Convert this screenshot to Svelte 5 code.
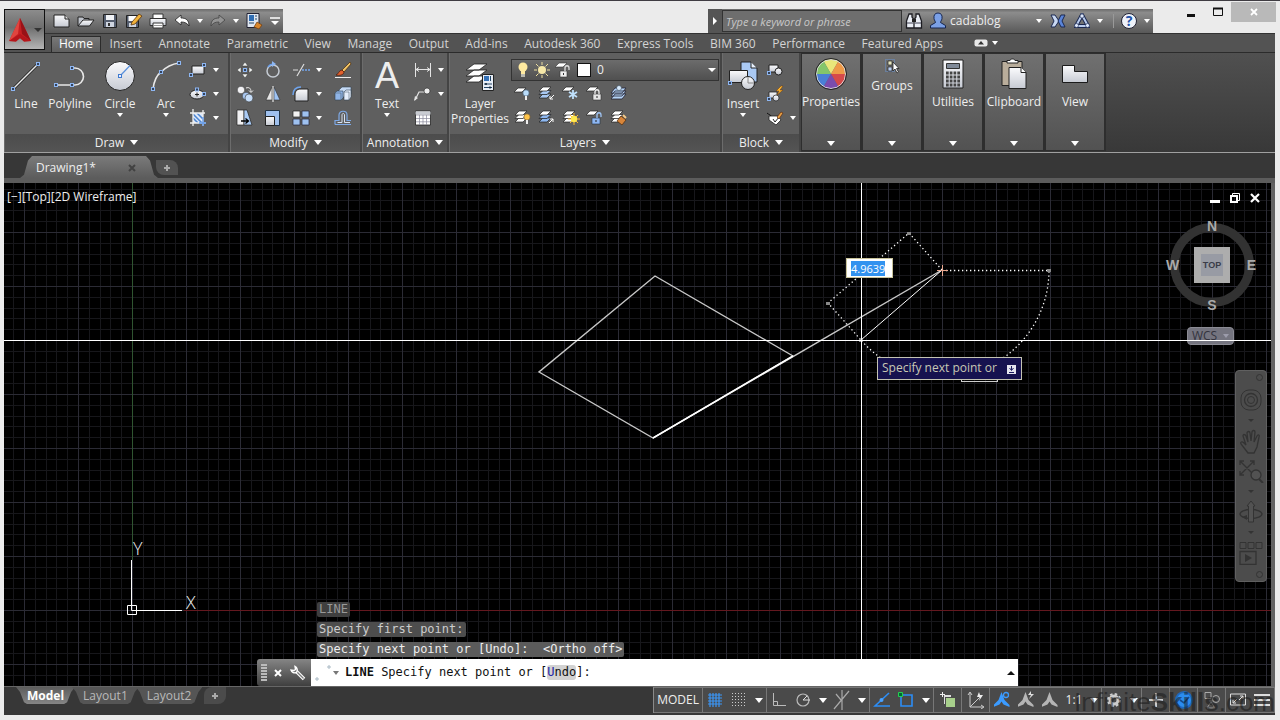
<script lang="ts">
  type Tool = { icon: string; label: string; arrow?: boolean };

  const menuTabs = [
    'Home', 'Insert', 'Annotate', 'Parametric', 'View', 'Manage', 'Output', 'Add-ins',
    'Autodesk 360', 'Express Tools', 'BIM 360', 'Performance', 'Featured Apps',
  ];

  const quickAccess: Tool[] = [
    { icon: 'new', label: 'New' },
    { icon: 'open', label: 'Open' },
    { icon: 'save', label: 'Save' },
    { icon: 'saveAs', label: 'Save As' },
    { icon: 'print', label: 'Plot' },
    { icon: 'undo', label: 'Undo', arrow: true },
    { icon: 'redo', label: 'Redo', arrow: true },
    { icon: 'workspace', label: 'Workspace' },
  ];

  const drawSmall: Tool[] = [
    { icon: 'rect', label: 'Rectangle', arrow: true },
    { icon: 'ellipse', label: 'Ellipse', arrow: true },
    { icon: 'hatch', label: 'Hatch', arrow: true },
  ];

  const modifyTools: Tool[] = [
    { icon: 'move', label: 'Move' },
    { icon: 'rotate', label: 'Rotate' },
    { icon: 'trim', label: 'Trim', arrow: true },
    { icon: 'erase', label: 'Erase' },
    { icon: 'copy', label: 'Copy' },
    { icon: 'mirror', label: 'Mirror' },
    { icon: 'fillet', label: 'Fillet', arrow: true },
    { icon: 'explode', label: 'Explode' },
    { icon: 'stretch', label: 'Stretch' },
    { icon: 'scale', label: 'Scale' },
    { icon: 'array', label: 'Array', arrow: true },
    { icon: 'offset', label: 'Offset' },
  ];

  const annotateTools: Tool[] = [
    { icon: 'dimension', label: 'Dimension', arrow: true },
    { icon: 'leader', label: 'Leader', arrow: true },
    { icon: 'table', label: 'Table' },
  ];

  const layerTools = [
    'layOff', 'layIso', 'layFreeze', 'layLock', 'layCurrent',
    'layOn', 'layUniso', 'layThaw', 'layUnlock', 'layMatch',
  ];

  const blockTools: Tool[] = [
    { icon: 'blockCreate', label: 'Create block' },
    { icon: 'blockEdit', label: 'Edit block' },
    { icon: 'blockAttr', label: 'Edit attributes', arrow: true },
  ];

  const collapsed: Tool[] = [
    { icon: 'properties', label: 'Properties' },
    { icon: 'groups', label: 'Groups' },
    { icon: 'utilities', label: 'Utilities' },
    { icon: 'clipboard', label: 'Clipboard' },
    { icon: 'view', label: 'View' },
  ];

  const statusGroups: Tool[][] = [
    [{ icon: 'sGrid', label: 'Grid' }, { icon: 'sSnap', label: 'Snap', arrow: true }],
    [{ icon: 'sOrtho', label: 'Ortho' }, { icon: 'sPolar', label: 'Polar', arrow: true }, { icon: 'sIso', label: 'Isodraft', arrow: true }],
    [{ icon: 'sTrack', label: 'Tracking' }, { icon: 'sOsnap', label: 'Object snap', arrow: true }],
    [{ icon: 'sCycle', label: 'Selection cycling' }],
    [{ icon: 'sUcs', label: 'Dynamic UCS' }],
    [{ icon: 'sAnnoBlue', label: 'Annotation visibility' }, { icon: 'sAnnoAuto', label: 'Auto scale' }, { icon: 'sAnno', label: 'Annotation scale' }, { icon: '', label: '1:1', arrow: true }],
    [{ icon: 'sGear', label: 'Workspace switching', arrow: true }],
    [{ icon: 'sPlus', label: 'Annotation monitor' }],
    [{ icon: 'sPerf', label: 'Graphics performance' }],
    [{ icon: 'sIsolate', label: 'Isolate objects' }],
    [{ icon: 'sFull', label: 'Clean screen' }, { icon: 'sMenu', label: 'Customization' }],
  ];

  const navTools: Tool[] = [
    { icon: 'nWheel', label: 'Wheel', arrow: true },
    { icon: 'nPan', label: 'Pan' },
    { icon: 'nZoom', label: 'Zoom', arrow: true },
    { icon: 'nOrbit', label: 'Orbit', arrow: true },
    { icon: 'nMotion', label: 'ShowMotion' },
  ];

  const history = ['LINE', 'Specify first point:', 'Specify next point or [Undo]:  <Ortho off>'];

  const grip = (x: number, y: number) =>
    `<rect x="${x - 1.5}" y="${y - 1.5}" width="3" height="3" fill="#34435c" stroke="#8db6f2"/>`;
  const sheet = (x: number, y: number, fill = '#fff') =>
    `<path d="M${x + 4} ${y}h8l-4 4h-8z" fill="${fill}" stroke="#222" stroke-width=".7"/>`;
  const stack = (top = '#fff', low = '#fff') => sheet(1, 10, low) + sheet(1, 6.5, low) + sheet(1, 3, top);
  const anno = (fill: string) =>
    `<path d="M7.500 1l3 8 5 5v2l-6-2.500-2-3-2 3-6 2.500v-2l5-5z" fill="${fill}"/>`;

  // markup for each icon, preceded by its width and height
  const icons: Record<string, [number, number, string]> = {
    logo: [24, 26, `<path d="M12 1 1 24l7 .5 4-3.500 4 3.500 7-.5z" fill="#c51f22"/><path d="M12 1 1 24l9-7z" fill="#e0453f"/><path d="M12 1l2 16 9 7z" fill="#981217"/><path d="M1 24l11-7 11 7-7 .5-4-3.500-4 3.500z" fill="#b5161b"/>`],
    new: [18, 16, `<path d="M1 2h11l4 4v8H1z" fill="url(#silver)" stroke="#222"/><path d="M12 2v4h4" fill="#ddd" stroke="#222"/>`],
    open: [18, 16, `<path d="M1 13V4h5l1 1.500h5V8" fill="#bfc3cb" stroke="#222"/><path d="M1 13l5-6h11l-4.500 6z" fill="url(#silver)" stroke="#222"/>`],
    save: [16, 16, `<path d="M1.500 1.500h13v13h-13z" fill="#565f70" stroke="#222"/><path d="M4 2h8v5H4z" fill="#f1f3f7"/><path d="M4 9h8v5H4z" fill="#cfd5e0"/><path d="M6 10h2v3H6z" fill="#333"/>`],
    saveAs: [18, 16, `<path d="M1.500 2.500h12v12h-12z" fill="#565f70" stroke="#222"/><path d="M3.500 3h8v5h-8z" fill="#fff"/><path d="M4 10h7v4H4z" fill="#cfd5e0"/><path d="M7 9l7-8 3 2-7 8-4 1z" fill="#f1b23a" stroke="#5b3510" stroke-width=".8"/>`],
    print: [18, 16, `<path d="M4 1h10v5H4z" fill="#fff" stroke="#333"/><path d="M1 5.500h16v7H1z" fill="url(#silver)" stroke="#333"/><path d="M4 10h10v5H4z" fill="#fff" stroke="#333"/><path d="M5 12.500h8" stroke="#999"/>`],
    undo: [16, 14, `<path d="M1 6l6-5v3c5 0 8 2 8 8-2-3-4-4-8-4v3z" fill="#fff" stroke="#222" stroke-width=".8"/>`],
    redo: [16, 14, `<path d="M15 6L9 1v3C4 4 1 6 1 12c2-3 4-4 8-4v3z" fill="#949494" stroke="#444" stroke-width=".8"/>`],
    workspace: [18, 18, `<path d="M2 1.500h12v14H2z" fill="#dfe6f0" stroke="#223"/><path d="M4 3h5v6H4z" fill="#2f6db3"/><path d="M10 4h2M10 7h2M4 11h5" stroke="#246"/><path d="M9 15l3-5 5 3-3 4z" fill="#d9862b" stroke="#6b3a10" stroke-width=".7"/>`],
    menu: [10, 8, `<path d="M0 1h10" stroke="#fff" stroke-width="1.500"/><path d="M1 4h8L5 8z" fill="#fff"/>`],
    expand: [6, 8, `<path d="M1 0l4 4-4 4z" fill="#fff"/>`],
    find: [18, 18, `<path d="M4 2h3v3l2 3v8H1.500V9zM11 2h3l2.500 7v7H9V8l2-3z" fill="#e9edf4" stroke="#1d1d22" stroke-width="1.300"/><path d="M2 11h6M10 11h6" stroke="#445"/><path d="M7 7h4v3H7z" fill="#222"/>`],
    user: [16, 18, `<path d="M8 1c3 0 4.500 2 4 5.500-.3 2-1.500 3-1.500 4l5 3V16h-15v-2.500l5-3c0-1-1.200-2-1.500-4C3.500 3 5 1 8 1z" fill="#7ba0e6" stroke="#16254d"/>`],
    exchange: [16, 14, `<path d="M1 1h4l4 6-4 6H1l3-6z" fill="#c9d8f2" stroke="#1b2850"/><path d="M15 1h-4L8 7l3 6h4l-3-6z" fill="#5a84d8" stroke="#1b2850"/>`],
    a360: [16, 16, `<path d="M8 2l6 11H2z" fill="none" stroke="#1b2850" stroke-width="4"/><path d="M8 2l6 11H2z" fill="none" stroke="#b9ccee" stroke-width="2"/><circle cx="8" cy="3" r="2" fill="#dce7fa" stroke="#1b2850" stroke-width=".6"/><circle cx="2.500" cy="12.500" r="2" fill="#dce7fa" stroke="#1b2850" stroke-width=".6"/><circle cx="13.500" cy="12.500" r="2" fill="#dce7fa" stroke="#1b2850" stroke-width=".6"/>`],
    min: [8, 10, `<path d="M0 8.500h8" stroke="#111" stroke-width="3"/>`],
    max: [10, 10, `<path d="M.5 1.500h9v7h-9z" fill="none" stroke="#111"/><path d="M0 1.500h10" stroke="#111" stroke-width="2"/>`],
    close: [8, 8, `<path d="M1 1l6 6M7 1L1 7" stroke="#fff" stroke-width="1.800"/>`],
    ribbonMin: [14, 8, `<rect x=".5" y=".5" width="13" height="7" rx="2" fill="#e8e8e8"/><path d="M4 5.500h6L7 2z" fill="#333"/>`],
    line: [32, 32, `<path d="M3 29L28 4" stroke="#222" stroke-width="3"/><path d="M3 29L28 4" stroke="#e8e8e8" stroke-width="1.500"/>${grip(3, 29)}${grip(28, 4)}`],
    polyline: [34, 32, `<path d="M3 25H22A8.500 8.500 0 0 0 22 8H19" fill="none" stroke="#e8e8e8" stroke-width="1.600"/>${grip(3, 25)}${grip(19, 25)}${grip(19, 8)}`],
    circle: [32, 32, `<circle cx="16" cy="16" r="14.500" fill="url(#silver)" stroke="#222"/><path d="M16 16L26 5.500" stroke="#5990dc" stroke-width="1.200"/><rect x="14.500" y="14.500" width="3" height="3" fill="#eef" stroke="#3e7bd0"/>`],
    arc: [32, 32, `<path d="M3 29C4 21 7 15 11 12C16 7 22 4 29 3" fill="none" stroke="#e8e8e8" stroke-width="1.600"/>${grip(3, 29)}${grip(11, 12)}${grip(29, 3)}`],
    rect: [18, 14, `<path d="M3 3h12v8H3z" fill="url(#silver)" stroke="#222"/>${grip(15, 2)}${grip(2, 12)}`],
    ellipse: [18, 14, `<ellipse cx="8" cy="7.500" rx="7" ry="4.500" fill="url(#silver)" stroke="#222"/><path d="M8 5.500v4M6 7.500h4" stroke="#222"/>${grip(8, 2.500)}${grip(15, 7)}`],
    hatch: [18, 18, `<path d="M4 4h10v10H4z" fill="#dce8fa"/><path d="M4 9l5 5M4 5l9 9M8 4l6 6" stroke="#4c84d0" stroke-width="1.500"/><path d="M4 0v17M1 4h15M14 1v16M1 14h16" stroke="#eee" stroke-width="1.300" fill="none"/><path d="M14 8v9M10 14h7" stroke="#5f98ea" stroke-width="1.300"/>`],
    move: [18, 18, `<path d="M9 1l3 4H6zM9 17l3-4H6zM1 9l4-3v6zM17 9l-4-3v6z" fill="#f1f3f1" stroke="#333" stroke-width=".5"/>${grip(9, 9)}`],
    rotate: [18, 18, `<circle cx="9" cy="10" r="6" fill="none" stroke="#c6ccd4" stroke-width="1.500"/><path d="M4 6a7 7 0 0 1 5-3" stroke="#6aa0ee" stroke-width="1.500" fill="none"/><path d="M8 0l4 3-4 3z" fill="#8db6f2"/>`],
    trim: [18, 16, `<path d="M1 8h5M5 14L12 2" stroke="#ddd" stroke-width="1.200"/><path d="M10 8h8" stroke="#74a6ee" stroke-width="1.400" stroke-dasharray="2 1"/>`],
    erase: [18, 18, `<path d="M1 16.500h16" stroke="#eee"/><path d="M8 9l8-8 1 2-7 8z" fill="#f0c466" stroke="#4b2a0c" stroke-width=".7"/><path d="M2 14c2 0 3-5 6-5l2 2c0 3-5 4-8 3z" fill="#e3622e" stroke="#4b1a0c" stroke-width=".7"/>`],
    copy: [18, 18, `<circle cx="5" cy="5" r="3.800" fill="#f1f1f4" stroke="#333" stroke-width=".6"/><circle cx="10" cy="11" r="3.800" fill="#a8c6f0" stroke="#333" stroke-width=".6"/><circle cx="13" cy="13" r="4" fill="#c5dcf8" stroke="#333" stroke-width=".6"/><path d="M10 3c3-1 5 0 5 4M13 5.500l2 2 2-2" fill="none" stroke="#eee"/>`],
    mirror: [16, 16, `<path d="M7 1v13H1z" fill="#e6e6e6" stroke="#333" stroke-width=".6"/><path d="M9 1v13h6z" fill="#9fc4f4" stroke="#333" stroke-width=".6"/><path d="M8 0v16" stroke="#fff"/>`],
    fillet: [18, 16, `<path d="M3 15V9c0-4 2-6 6-6h7v12z" fill="url(#silver)" stroke="#222"/><path d="M1 9c0-5 2-8 8-8" stroke="#6ea3ec" stroke-width="1.500" fill="none"/>`],
    explode: [18, 16, `<path d="M5 4l3-3h9v7l-3 3H5z" fill="#c5daf5" stroke="#345" stroke-width=".6"/><path d="M1 7l2-2h6v7l-2 2H1z" fill="#8fb4e6" stroke="#345" stroke-width=".6"/><path d="M10 6l2-2h5v7l-2 3h-5z" fill="#e5eefb" stroke="#345" stroke-width=".6"/><path d="M1 7h6v7M10 6h5v8" fill="none" stroke="#567" stroke-width=".6"/>`],
    stretch: [18, 18, `<path d="M1 1h7v15H1z" fill="#f1f1f3" stroke="#222" stroke-width=".7"/><path d="M8 1h3l5 15H8z" fill="#a9caf4" stroke="#222" stroke-width=".7"/><path d="M5 12h7M9.500 9.500l3 2.500-3 2.500" stroke="#000" stroke-width="1.300" fill="none"/>`],
    scale: [18, 18, `<path d="M1.500 1.500h14v15h-14z" fill="#9fc0ee" stroke="#234"/><path d="M1.500 7.500h9v9h-9z" fill="url(#silver)" stroke="#222"/>`],
    array: [18, 18, `<path d="M1 2h7v6H1z" fill="#f2f2f2" stroke="#222" stroke-width=".7"/><path d="M10 2h7v6h-7zM1 10h7v6H1zM10 10h7v6h-7z" fill="#9ec1f0" stroke="#223" stroke-width=".7"/>`],
    offset: [18, 16, `<path d="M1 14.500h16M1 14.500v-4h4V5c0-5 8-5 8 0v5.500h4" fill="none" stroke="#7ea9e6" stroke-width="1.200"/><path d="M3.500 12.500H8V5c0-2 2.500-2 2.500 0v7.500H16" stroke="#d7e2f2" fill="none"/>`],
    dimension: [18, 16, `<path d="M1.500 1v14M16.500 1v14M2 7.500h14M5 5.500l-3 2 3 2M13 5.500l3 2-3 2" stroke="#e4e4e4" fill="none"/>`],
    leader: [18, 16, `<path d="M1 14l4-8h6" stroke="#e4e4e4" fill="none" stroke-width="1.200"/><path d="M0 15l1-5 3 2z" fill="#e4e4e4"/><circle cx="13" cy="5" r="3" fill="#eee" stroke="#222" stroke-width=".6"/>`],
    table: [16, 16, `<path d="M.5 1h15v14H.5z" fill="#fff" stroke="#222" stroke-width=".8"/><path d="M.5 1.500h15v3H.5z" fill="#c9ccd2"/><path d="M1 5h14M1 8.500h14M1 11.800h14M4.500 5v10M8 5v10M11.500 5v10" stroke="#889" stroke-width=".7"/>`],
    layerProps: [30, 30, `<path d="M9 15h13l-8 6H1zM9 9h13l-8 6H1zM9 3h13l-8 6H1z" fill="#fff" stroke="#222" stroke-width=".8"/><path d="M17.500 13.500h11v16h-11z" fill="#e7edf6" stroke="#222"/><path d="M19 15h5v5h-5z" fill="#3572b8"/><path d="M25.500 15v5M19 23h8M19 26.500h8" stroke="#246"/><path d="M21 22v2M25 25.500v2" stroke="#123" stroke-width="1.500"/>`],
    bulb: [12, 16, `<circle cx="6" cy="5" r="4.500" fill="#ffeaa0"/><path d="M4 8h4v4H4z" fill="#ffeaa0"/><path d="M4 12h4v3H4z" fill="#b8b8b0"/>`],
    sun: [16, 16, `<circle cx="8" cy="8" r="4" fill="#f6e8a8"/><path d="M8 0v3M8 13v3M0 8h3M13 8h3M2 2l2.500 2.500M11.500 11.500L14 14M14 2l-2.500 2.500M4.500 11.500L2 14" stroke="#eee0a0"/>`],
    comboLock: [16, 16, `<path d="M4 1h8L8 5H0z" fill="#fff" stroke="#333" stroke-width=".6"/><path d="M5 9h7v6H5z" fill="#eee" stroke="#333" stroke-width=".6"/><path d="M10 9V6c0-3 4-3 4 0v2" stroke="#ddd" stroke-width="1.300" fill="none"/><path d="M8.500 11v2" stroke="#333"/>`],
    layOff: [18, 18, `${sheet(0, 4)}<circle cx="12" cy="9" r="3.200" fill="#b9dcfa" stroke="#345" stroke-width=".6"/><path d="M12 12v4" stroke="#eee" stroke-width="2"/>`],
    layIso: [18, 18, `${stack('#fff', '#a8c8f2')}<path d="M16 11l-4 4M12 12v3h3" stroke="#fff" fill="none"/>`],
    layFreeze: [18, 18, `${sheet(0, 3)}<path d="M11 6v9M7 8l8 5M7 13l8-5" stroke="#bfe0fb" stroke-width="1.800"/>`],
    layLock: [18, 18, `${sheet(0, 3)}<path d="M7 10h8v6H7z" fill="#e6e6e6" stroke="#333" stroke-width=".6"/><path d="M9 10V8c0-3 4-3 4 0v2" stroke="#eee" fill="none" stroke-width="1.300"/><path d="M11 12v2" stroke="#222"/>`],
    layCurrent: [18, 18, `<path d="M5 10h11l-4 5H1zM5 7h11l-4 5H1zM5 4h11l-4 5H1z" fill="#b4d2f6" stroke="#223" stroke-width=".8"/><circle cx="9" cy="4" r="2.500" fill="#d9ebfd" stroke="#345" stroke-width=".6"/>`],
    layOn: [18, 18, `${stack()}<circle cx="13" cy="9" r="3.200" fill="#ffc44a" stroke="#543" stroke-width=".6"/><path d="M13 12v4" stroke="#eee" stroke-width="2"/>`],
    layUniso: [18, 18, `${stack('#fff', '#8db6ee')}<path d="M11 15l4-4M12 11h3v3" stroke="#fff" fill="none"/>`],
    layThaw: [18, 18, `${stack()}<path d="M12 5v12M6 11h12M8 7l8 8M16 7l-8 8" stroke="#ffb52e"/><circle cx="12" cy="11" r="3.200" fill="#ffe84a"/>`],
    layUnlock: [18, 18, `${sheet(0, 3)}<path d="M6 10h8v6H6z" fill="#8db6f2" stroke="#234" stroke-width=".6"/><path d="M11 10V7c0-3 4-3 4 0v2" stroke="#9fc4f4" fill="none" stroke-width="1.300"/><path d="M10 12v2" stroke="#222"/>`],
    layMatch: [18, 18, `${stack()}<path d="M7 13l4-5 5 4-4 5z" fill="#d7853a" stroke="#4b2a0c" stroke-width=".7"/><path d="M13 7l3 3" stroke="#f4c98a" stroke-width="2"/>`],
    insert: [32, 30, `<path d="M14 1h10l6 6v14H14z" fill="#a9c9f4" stroke="#222"/><path d="M24 1v6h6" fill="#e8f1fd" stroke="#222"/><path d="M2.500 9.500h18v12h-18z" fill="url(#silver)" stroke="#222"/><circle cx="21" cy="22" r="6.500" fill="url(#silver)" stroke="#222"/><path d="M21 16v6h6" fill="none" stroke="#888"/>${grip(3, 22)}`],
    blockCreate: [18, 16, `<path d="M3 3h9v7H3z" fill="url(#silver)" stroke="#222"/><circle cx="12.500" cy="9.500" r="3.500" fill="url(#silver)" stroke="#222"/>${grip(3, 11)}`],
    blockEdit: [18, 18, `<path d="M3 7h8v6H3z" fill="url(#silver)" stroke="#222" stroke-width=".8"/><circle cx="10" cy="13" r="3" fill="url(#silver)" stroke="#222" stroke-width=".7"/><path d="M15 1l-5 5h3l-2 4 6-5h-3l3-4z" fill="#ffb52e" stroke="#6b3a10" stroke-width=".5"/>${grip(3, 14)}`],
    blockAttr: [18, 16, `<path d="M1 3c2 2 3 1 4 3" stroke="#111" fill="none"/><path d="M3 6h9l3 4-5 5-7-5z" fill="#fff" stroke="#222" stroke-width=".8"/><path d="M7 9l2 3 4-5" stroke="#222" fill="none"/><path d="M11 7l4-5 2 1-4 6z" fill="#e8a246" stroke="#5b2a10" stroke-width=".7"/>`],
    properties: [32, 32, `<path d="M16 16L8.500 3A15 15 0 0 1 23.500 3z" fill="#e9e77a"/><path d="M16 16L8.500 3A15 15 0 0 0 1 16z" fill="#84c56b"/><path d="M16 16L23.500 3A15 15 0 0 1 31 16z" fill="#ee9a48"/><path d="M16 16H1A15 15 0 0 0 8.500 29z" fill="#4a7fd6"/><path d="M16 16H31A15 15 0 0 1 23.500 29z" fill="#d64a4a"/><path d="M16 16L8.500 29A15 15 0 0 0 23.500 29z" fill="#7a4cae"/><circle cx="16" cy="16" r="14.500" fill="none" stroke="#ddd"/><circle cx="16" cy="16" r="15.500" fill="none" stroke="#222"/>`],
    groups: [16, 16, `<path d="M1.500 1.500h9v12h-9z" fill="none" stroke="#6a94d0" stroke-dasharray="1 1"/><path d="M4 3h4v4H4z" fill="#e6e6c0" stroke="#222" stroke-width=".7"/><path d="M4 9h4v4H4z" fill="#b9cdf0" stroke="#222" stroke-width=".7"/><path d="M9 4v9l2-2 2 4 1.500-1-2-3.500H15z" fill="#fff" stroke="#222" stroke-width=".8"/>`],
    utilities: [24, 30, `<path d="M2 1h20v28H2z" fill="url(#silver)" stroke="#222"/><path d="M5.500 4.500h13v5h-13z" fill="#808a99" stroke="#333"/><path d="M5 14h14M5 18h14M5 22h14M5 26h14" stroke="#444" stroke-width="2.800" stroke-dasharray="2.700 1.070"/>`],
    clipboard: [28, 32, `<path d="M2 3.500h20v24H2z" fill="#b9ad9b" stroke="#222"/><path d="M7 5V2.500h3c0-2 5-2 5 0h3V5z" fill="#fff" stroke="#222"/><path d="M9 9.500h12l5 5v16H9z" fill="url(#silver)" stroke="#222"/><path d="M21 9.500v5h5" fill="#fff" stroke="#222"/>`],
    view: [28, 20, `<path d="M1.500 1.500h12v6h13v11h-25z" fill="url(#silver)" stroke="#1b1b1b"/>`],
    cross: [8, 8, `<path d="M1 1l6 6M7 1L1 7" stroke="currentColor" stroke-width="2"/>`],
    add: [8, 8, `<path d="M4 1v6M1 4h6" stroke="#aaa" stroke-width="2"/>`],
    vpMin: [10, 10, `<path d="M0 8.500h10" stroke="#fff" stroke-width="3"/>`],
    vpRestore: [10, 10, `<path d="M2.500 2V.500h7v7H8" fill="none" stroke="#fff"/><path d="M1 3h6v6H1z" fill="none" stroke="#fff" stroke-width="2"/>`],
    vpClose: [10, 10, `<path d="M1 1l8 8M9 1L1 9" stroke="#fff" stroke-width="2.200"/>`],
    wrench: [16, 16, `<path d="M6 6L14 14" stroke="#fff" stroke-width="3.500"/><path d="M6 6L13.500 13.500" stroke="#777" stroke-width="1.200"/><path d="M5 1.500l.5 3-1.500 1-3-.5a4 4 0 0 0 5.500 2.500A4 4 0 0 0 5 1.500z" fill="#777" stroke="#fff" stroke-width="1.400"/>`],
    cmdLine: [16, 18, `<path d="M1 14h2v2H1zM13 2h2v2h-2z" fill="none" stroke="#a9b9c4"/>`],
    sGrid: [16, 16, `<path d="M1 3h14M1 6h14M1 9h14M1 12h14M3 1v14M6 1v14M9 1v14M12 1v14" stroke="#3b96f6" stroke-width="1.200"/>`],
    sSnap: [16, 16, `<path d="M1 1.500h14M1 4.500h14M1 7.500h14M1 10.500h14M1 13.500h14" stroke="#ccc" stroke-dasharray="1 2"/>`],
    sOrtho: [16, 16, `<path d="M2.500 1v12.500H15M2.500 9.500h4v4" stroke="#bbb" fill="none"/>`],
    sPolar: [16, 16, `<circle cx="8" cy="8" r="6" fill="none" stroke="#bbb" stroke-width="1.200"/><path d="M8 8h7M8 8l4-4" stroke="#ddd"/>`],
    sIso: [18, 20, `<path d="M16 1L1 19M9 0v20M3 4l5 6" stroke="#aaa" stroke-width="1.200"/>`],
    sTrack: [18, 16, `<path d="M16 1L2 14h15" stroke="#2c8df5" stroke-width="1.600" fill="none"/><circle cx="8.500" cy="8" r="2" fill="#49a1ff"/>`],
    sOsnap: [18, 18, `<path d="M4 4h11v11H4z" fill="none" stroke="#2c8df5" stroke-width="1.600"/><path d="M1.500 1.500h4v4h-4z" fill="#063" stroke="#25d050"/>`],
    sCycle: [16, 16, `<path d="M6 6h9v9H6z" fill="#a7cf8b"/><path d="M4 3h7v2H5v7H4z" fill="#ddd"/><path d="M2.500 0v5M0 2.500h5" stroke="#eee"/>`],
    sUcs: [18, 18, `<path d="M3 2v14h13M3 16L13 6M1 4l2-3 2 3M14 14l3 2-3 2" stroke="#ccc" fill="none"/><path d="M12 1l-2 5h3l-1 4 4-6h-3z" fill="#eee"/>`],
    sAnnoBlue: [16, 18, `${anno('#3b9bff')}<circle cx="12" cy="4" r="2.500" fill="none" stroke="#3b9bff" stroke-width="1.300"/>`],
    sAnnoAuto: [16, 18, `${anno('#b5b5b5')}<path d="M13 0l-3 4h3l-2 4 5-5h-3z" fill="#ddd"/>`],
    sAnno: [16, 18, anno('#b5b5b5')],
    sGear: [16, 16, `<circle cx="8" cy="8" r="4" fill="none" stroke="#ccc" stroke-width="3"/><circle cx="8" cy="8" r="6" fill="none" stroke="#ccc" stroke-width="2" stroke-dasharray="2.500 2.210"/>`],
    sPlus: [14, 16, `<path d="M7 1v14M0 8h14" stroke="#ccc" stroke-width="2"/>`],
    sPerf: [18, 18, `<circle cx="9" cy="9" r="9" fill="#1f68bd"/><circle cx="9" cy="9" r="7" fill="#2b8cf0"/><path d="M5 9l4 3 5-6" stroke="#164a8a" stroke-width="1.600" fill="none"/>`],
    sIsolate: [18, 18, `<path d="M2 1.500h6v6H2z" fill="none" stroke="#aaa"/><circle cx="13" cy="8" r="3.500" fill="none" stroke="#aaa"/><path d="M8 11l4 6H4z" fill="none" stroke="#999"/>`],
    sFull: [16, 14, `<path d="M.5 1h15v11H.5z" fill="none" stroke="#ddd"/><path d="M3 10l4-4M3 7v3h3M13 3L9 7M10 3h3v3" fill="none" stroke="#ddd"/>`],
    sMenu: [16, 14, `<path d="M0 2h16M0 7h16M0 12h16" stroke="#ddd" stroke-width="1.800"/>`],
    nWheel: [24, 24, `<rect x="2" y="2" width="20" height="20" rx="8" fill="none" stroke="#2b2b2b"/><circle cx="12" cy="12" r="6.500" fill="none" stroke="#2b2b2b" stroke-width="1.300"/><circle cx="12" cy="12" r="3.500" fill="none" stroke="#2b2b2b"/>`],
    nPan: [24, 26, `<path d="M9 24L2 15c-1-2 1-3 3-1l2 2L4 7c0-2 2-2 3 0l2 6-1-9c0-2 3-2 3 0l1 8 1-9c0-2 3-2 3 0l-1 10 3-6c1-2 3-1 2 1l-2 10-3 6z" fill="none" stroke="#2b2b2b" stroke-width="1.300"/>`],
    nZoom: [26, 24, `<path d="M2 2l14 14M16 2L2 16M2 6V2h4M12 2h4v4M2 12v4h4" fill="none" stroke="#2b2b2b" stroke-width="1.300"/><circle cx="18" cy="16" r="5" fill="#555" stroke="#2b2b2b" stroke-width="1.300"/><path d="M21 20l4 4" stroke="#2b2b2b" stroke-width="2"/>`],
    nOrbit: [24, 24, `<ellipse cx="12" cy="14" rx="11" ry="4.500" fill="none" stroke="#2b2b2b" stroke-width="1.300"/><path d="M9.500 22V6H8l4-5 4 5h-1.500v16z" fill="#555" stroke="#2b2b2b"/><path d="M3 17l5-2v5z" fill="#2b2b2b"/>`],
    nMotion: [24, 24, `<path d="M1 1.500h6v6H1zM9 1.500h6v6H9zM17 1.500h6v6h-6z" fill="none" stroke="#2b2b2b"/><path d="M1 10.500h16v13H1z" fill="none" stroke="#2b2b2b" stroke-width="1.300"/><path d="M6 13l7 4-7 4z" fill="#2b2b2b"/>`],
  };

  let activeTab = $state('Home');
  let layout = $state('Model');
  let keyword = $state('');
  let layer = $state('0');
  let distance = $state('4.9639');
  let command = $state('');
</script>

{#snippet icon(name: string)}
  {@const [w, h, body] = icons[name]}
  <svg width={w} height={h} viewBox="0 0 {w} {h}" aria-hidden="true">{@html body}</svg>
{/snippet}

{#snippet arrow()}
  <span class="arrow" aria-hidden="true"></span>
{/snippet}

{#snippet small(tool: Tool)}
  <div class="small">
    <button class="tool" aria-label={tool.label}>{@render icon(tool.icon)}</button>
    {#if tool.arrow}
      <button class="drop" aria-label="{tool.label} options">{@render arrow()}</button>
    {/if}
  </div>
{/snippet}

<svg class="defs" width="0" height="0" aria-hidden="true">
  <linearGradient id="silver" x2="0" y2="1">
    <stop offset="0" stop-color="#fbfbfd" />
    <stop offset="1" stop-color="#c6cad3" />
  </linearGradient>
</svg>

<div class="window">
  <header>
    <button class="app-button" aria-label="Application menu">{@render icon('logo')}<span class="arrow dark"></span></button>
    <div class="quick">
      {#each quickAccess as q}
        <button class="tool" aria-label={q.label}>{@render icon(q.icon)}</button>
        {#if q.arrow}<button class="drop" aria-label="{q.label} list">{@render arrow()}</button>{/if}
      {/each}
      <button class="quick-menu" aria-label="Customize">{@render icon('menu')}</button>
    </div>
    <div class="info">
      <button class="expand" aria-label="Expand search">{@render icon('expand')}</button>
      <input type="text" placeholder="Type a keyword or phrase" aria-label="Search" bind:value={keyword} />
      <button class="tool" aria-label="Find">{@render icon('find')}</button>
      <button class="account">{@render icon('user')}<span>cadablog</span>{@render arrow()}</button>
      <button class="tool" aria-label="Exchange">{@render icon('exchange')}</button>
      <button class="tool" aria-label="A360">{@render icon('a360')}</button>
      <button class="drop" aria-label="A360 options">{@render arrow()}</button>
      <span class="divider"></span>
      <button class="help" aria-label="Help"><b>?</b></button>
      <button class="drop" aria-label="Help options">{@render arrow()}</button>
    </div>
    <div class="controls">
      <button aria-label="Minimize">{@render icon('min')}</button>
      <button aria-label="Maximize">{@render icon('max')}</button>
      <button class="close" aria-label="Close">{@render icon('close')}</button>
    </div>
  </header>

  <main>
    <nav class="menu">
      <div class="menu-tabs">
        {#each menuTabs as tab}
          <button class:active={activeTab === tab} onclick={() => (activeTab = tab)}>{tab}</button>
        {/each}
      </div>
      <button class="ribbon-toggle" aria-label="Minimize ribbon">{@render icon('ribbonMin')}{@render arrow()}</button>
    </nav>

    <section class="ribbon">
      <div class="panel">
        <div class="body draw">
          <button class="big w40">{@render icon('line')}<span>Line</span></button>
          <button class="big w48">{@render icon('polyline')}<span>Polyline</span></button>
          <button class="big w52">{@render icon('circle')}<span>Circle</span>{@render arrow()}</button>
          <button class="big w40">{@render icon('arc')}<span>Arc</span>{@render arrow()}</button>
          <div class="column">
            {#each drawSmall as t}{@render small(t)}{/each}
          </div>
        </div>
        <button class="title">Draw {@render arrow()}</button>
      </div>

      <div class="panel">
        <div class="body modify">
          {#each modifyTools as t}{@render small(t)}{/each}
        </div>
        <button class="title">Modify {@render arrow()}</button>
      </div>

      <div class="panel">
        <div class="body">
          <button class="big w48"><span class="letter">A</span><span>Text</span>{@render arrow()}</button>
          <div class="column">
            {#each annotateTools as t}{@render small(t)}{/each}
          </div>
        </div>
        <button class="title">Annotation {@render arrow()}</button>
      </div>

      <div class="panel">
        <div class="body">
          <button class="big w60">{@render icon('layerProps')}<span>Layer Properties</span></button>
          <div class="layers">
            <div class="combo">
              {@render icon('bulb')}{@render icon('sun')}{@render icon('comboLock')}
              <i class="swatch"></i>
              <select aria-label="Layer" bind:value={layer}><option>0</option></select>
              {@render arrow()}
            </div>
            <div class="layer-grid">
              {#each layerTools as name}
                <button class="tool" aria-label={name}>{@render icon(name)}</button>
              {/each}
            </div>
          </div>
        </div>
        <button class="title">Layers {@render arrow()}</button>
      </div>

      <div class="panel">
        <div class="body">
          <button class="big w40">{@render icon('insert')}<span>Insert</span>{@render arrow()}</button>
          <div class="column">
            {#each blockTools as t}{@render small(t)}{/each}
          </div>
        </div>
        <button class="title">Block {@render arrow()}</button>
      </div>

      {#each collapsed as c}
        <button class="folded" class:compact={c.icon === 'groups'}>
          <span class="pic">{@render icon(c.icon)}</span>
          <span>{c.label}</span>
          {@render arrow()}
        </button>
      {/each}
    </section>

    <div class="files">
      <div class="file"><span>Drawing1*</span><button aria-label="Close Drawing1">{@render icon('cross')}</button></div>
      <button class="file-add" aria-label="New drawing">{@render icon('add')}</button>
    </div>

    <section class="viewport">
      <svg class="drawing" width="100%" height="100%">
        <defs>
          <pattern id="grid" x="20" y="49" width="54" height="54" patternUnits="userSpaceOnUse">
            <path d="M11.500 0v54M22.500 0v54M32.500 0v54M43.500 0v54M0 11.500h54M0 22.500h54M0 32.500h54M0 43.500h54" stroke="#17171b" />
            <path d="M.5 0v54M0 .5h54" stroke="#2b2b35" />
          </pattern>
        </defs>
        <rect width="100%" height="100%" fill="url(#grid)" />
        <path d="M128.500 0v377" stroke="#2f5430" />
        <line x1="180" y1="427.500" x2="100%" y2="427.500" stroke="#64181f" />

        <g class="ucs">
          <path d="M123.500 422.500h9v9h-9zM127.500 377v50.500H178" />
          <text x="129" y="372">Y</text>
          <text x="182" y="426">X</text>
        </g>

        <g class="lines">
          <path d="M789 173L651 93 535 189 649 255z" />
          <path d="M649 255L938 87" />
        </g>
        <path d="M649 255L789 173" stroke="#fff" stroke-width="1.500" />
        <path d="M938 87L857 157" stroke="#fff" />
        <path class="dotted" d="M938 87L905 50 824 120 857 157M938 87.500H1045A107 107 0 0 1 857 157" />
        <path d="M903 49h4v3h-4zM822 119h4v3h-4zM1043 86h4v3h-4zM855 156h4v3h-4z" fill="#888" />
        <path d="M938.500 82v11M933 87.500h11" stroke="#e7a58e" />
      </svg>

      <p class="view-label">[−][Top][2D Wireframe]</p>
      <div class="view-controls">
        <button aria-label="Minimize view">{@render icon('vpMin')}</button>
        <button aria-label="Restore view">{@render icon('vpRestore')}</button>
        <button aria-label="Close view">{@render icon('vpClose')}</button>
      </div>

      <div class="cube">
        <b class="n">N</b><b class="w">W</b><b class="e">E</b><b class="s">S</b>
        <button>TOP</button>
      </div>
      <button class="wcs">WCS <span class="arrow"></span></button>

      <div class="navbar">
        <i class="dot"></i>
        {#each navTools as n}
          <button aria-label={n.label}>{@render icon(n.icon)}</button>
          {#if n.arrow}<span class="arrow dark"></span>{/if}
        {/each}
        <i class="dot"></i>
      </div>

      <svg class="drawing cursor" width="100%" height="100%" aria-hidden="true">
        <path d="M0 157.500h4000M857.500 0v4000" stroke="#fff" />
      </svg>

      <input class="distance" aria-label="Distance" bind:value={distance} />
      <div class="angle"></div>
      <div class="hint">
        <span>Specify next point or</span>
        <svg width="9" height="9" viewBox="0 0 9 9" aria-hidden="true">
          <path d="M0 0h9v9H0z" fill="#e4e4ee" />
          <path d="M4.500 1v4M2.500 3l2 2.500 2-2.500M2 7.500h5" stroke="#1b1b60" fill="none" />
        </svg>
      </div>

      <div class="command">
        <ul>
          {#each history as line}<li>{line}</li>{/each}
        </ul>
        <div class="command-bar">
          <div class="command-tools">
            <i class="handle"></i>
            <button aria-label="Close command line">{@render icon('cross')}</button>
            <button aria-label="Customize command line">{@render icon('wrench')}</button>
          </div>
          <div class="prompt">
            {@render icon('cmdLine')}
            <span class="arrow dark"></span>
            <label for="command"><b>LINE</b> Specify next point or [</label>
            <button class="undo"><em>U</em>ndo</button>
            <span>]:</span>
            <input id="command" bind:value={command} />
            <button class="history" aria-label="Show history"><span class="arrow up"></span></button>
          </div>
        </div>
      </div>
    </section>

    <footer>
      <div class="layouts">
        {#each ['Model', 'Layout1', 'Layout2'] as name}
          <button class:active={layout === name} onclick={() => (layout = name)}>{name}</button>
        {/each}
        <button class="layout-add" aria-label="New layout">{@render icon('add')}</button>
      </div>
      <div class="status">
        <div class="group"><button class="model">MODEL</button></div>
        {#each statusGroups as group}
          <div class="group">
            {#each group as s}
              <button class="tool" aria-label={s.label}>
                {#if s.icon}{@render icon(s.icon)}{:else}{s.label}{/if}
              </button>
              {#if s.arrow}<button class="drop" aria-label="{s.label} options">{@render arrow()}</button>{/if}
            {/each}
          </div>
        {/each}
      </div>
      <span class="brand">Infinite<b>Skills</b>.com</span>
    </footer>
  </main>
</div>

<style>
  :global(body) {
    margin: 0;
    background: #ebebeb;
  }
  .defs {
    position: absolute;
  }
  .window {
    display: flex;
    flex-direction: column;
    min-height: 100vh;
    box-sizing: border-box;
    padding: 0 5px 5px 4px;
    border-top: 1px solid #3f3c42;
    background: #ebebeb;
    color: #eee;
    font: 12px/16px 'Open Sans', 'Noto Sans', sans-serif;
  }
  button,
  input,
  select {
    margin: 0;
    padding: 0;
    border: 0;
    background: none;
    color: inherit;
    font: inherit;
  }
  button {
    display: flex;
    align-items: center;
    justify-content: center;
  }
  svg {
    display: block;
    flex: none;
  }
  .arrow {
    flex: none;
    border: 4px solid transparent;
    border-top-color: #fff;
    border-bottom: 0;
  }
  .arrow.dark {
    border-top-color: #333;
  }
  .arrow.up {
    border-top: 0;
    border-bottom: 4px solid #111;
  }
  .tool {
    width: 24px;
    height: 24px;
  }
  .drop {
    width: 12px;
    height: 24px;
  }
  .drop .arrow {
    border-width: 4px 3px 0;
  }

  /* title bar */
  header {
    position: relative;
    display: flex;
    align-items: flex-end;
    height: 32px;
  }
  .app-button {
    position: absolute;
    top: 8px;
    left: 0;
    z-index: 1;
    gap: 2px;
    width: 41px;
    height: 41px;
    box-sizing: border-box;
    border: 1px solid #111;
    background: linear-gradient(#8c8c8c, #6e6e6e 45%, #b5b5b5);
  }
  .quick,
  .info {
    display: flex;
    align-items: center;
    height: 24px;
    background: linear-gradient(#6a6a6a, #8c8c8c 15%, #585858);
  }
  .quick {
    margin-left: 41px;
    padding-left: 5px;
  }
  .quick-menu {
    width: 17px;
  }
  .info {
    margin-left: auto;
    box-sizing: border-box;
    width: 445px;
  }
  .expand {
    width: 14px;
    height: 24px;
    background: #555;
  }
  .info input {
    box-sizing: border-box;
    width: 180px;
    height: 22px;
    padding: 0 3px;
    border: 1px solid #333;
    background: #6e6e6e;
    font-size: 11px;
  }
  .info input::placeholder {
    color: #c8c8c8;
    font-style: italic;
    opacity: 1;
  }
  .account {
    flex: 1;
    gap: 4px;
    padding: 0 4px;
  }
  .account .arrow {
    margin-left: auto;
    border-width: 4px 3px 0;
  }
  .divider {
    width: 1px;
    height: 14px;
    margin: 0 7px;
    background: #999;
  }
  .help {
    width: 16px;
    height: 16px;
    margin-right: 4px;
    border: 1px solid #223;
    border-radius: 50%;
    background: #eef2fa;
    color: #2352a8;
    font-size: 14px;
  }
  .controls {
    display: flex;
    align-self: flex-start;
    margin: 1px -1px 0 24px;
  }
  .controls button {
    width: 27px;
    height: 20px;
  }
  .controls .close {
    width: 45px;
    background: #b9b9b9;
  }

  main {
    display: flex;
    flex: 1;
    flex-direction: column;
    background: #373737;
  }

  /* ribbon */
  .menu {
    display: flex;
    align-items: flex-end;
    height: 20px;
    padding-left: 47px;
    border-top: 1px solid #333;
    border-bottom: 1px solid #2b2b2b;
    box-sizing: border-box;
    background: #535353;
    color: #d4d4d4;
  }
  .menu-tabs {
    display: flex;
    flex: 0 1 900px;
    justify-content: space-between;
  }
  .menu-tabs button {
    height: 16px;
    padding: 0 8px;
    white-space: nowrap;
  }
  .menu-tabs .active {
    margin-bottom: -1px;
    padding: 0 7px 1px;
    border: 1px solid #2b2b2b;
    border-bottom: 0;
    background: linear-gradient(#787878, #5f5f5f);
    color: #fff;
  }
  .ribbon-toggle {
    gap: 4px;
    height: 18px;
    margin-left: 23px;
  }
  .ribbon-toggle .arrow {
    border-width: 4px 3px 0;
  }
  .ribbon {
    display: flex;
    height: 99px;
    border-bottom: 1px solid #a0a0a0;
    background: linear-gradient(#505050, #383838);
  }
  .panel {
    display: flex;
    flex-direction: column;
    border-right: 2px solid #444;
    border-left: 1px solid #6c6c6c;
    background: #5f5f5f;
  }
  .body {
    display: flex;
    flex: 1;
    padding-top: 5px;
  }
  .title {
    gap: 6px;
    height: 18px;
    padding-bottom: 1px;
    background: linear-gradient(#4c4c4c, #545454);
  }
  .title .arrow,
  .folded .arrow {
    border-width: 5px 4px 0;
  }
  .big {
    flex-direction: column;
    align-self: flex-start;
    justify-content: flex-start;
    padding-top: 2px;
    line-height: 15px;
  }
  .big span:not(.arrow, .letter) {
    margin-top: 4px;
  }
  .big svg,
  .letter {
    height: 32px;
  }
  .letter {
    font: 36px/32px 'Liberation Sans', Arial, sans-serif;
  }
  .big .arrow {
    margin-top: 2px;
    border-width: 4px 3px 0;
  }
  .w40 {
    width: 40px;
  }
  .w48 {
    width: 48px;
  }
  .w52 {
    width: 52px;
  }
  .w60 {
    width: 60px;
  }
  .small {
    display: flex;
    height: 24px;
  }
  .draw {
    padding-left: 1px;
    padding-right: 6px;
  }
  .modify {
    display: grid;
    grid-template-columns: 28px 28px 42px 28px;
    grid-auto-rows: 24px;
    padding-left: 2px;
    padding-right: 1px;
  }
  .layers {
    padding: 1px 1px 0 1px;
  }
  .combo {
    display: flex;
    align-items: center;
    gap: 6px;
    box-sizing: border-box;
    width: 208px;
    height: 22px;
    padding: 0 2px 0 5px;
    border: 1px solid #333;
    background: linear-gradient(#6c6c6c, #505050);
  }
  .combo svg + svg {
    margin-left: -1px;
  }
  .combo select {
    flex: 1;
    appearance: none;
  }
  .swatch {
    width: 12px;
    height: 12px;
    border: 1px solid #111;
    background: #fff;
  }
  .layer-grid {
    display: grid;
    grid-template-columns: repeat(5, 24px);
  }
  .folded {
    flex-direction: column;
    justify-content: flex-start;
    box-sizing: border-box;
    width: 61px;
    height: 98px;
    padding-bottom: 4px;
    border: 1px solid #2e2e2e;
    border-right-width: 2px;
    background: linear-gradient(#707070, #525252);
  }
  .pic {
    display: flex;
    align-items: center;
    height: 40px;
  }
  .compact .pic {
    height: 24px;
  }
  .folded .arrow {
    margin-top: auto;
  }

  /* drawing tabs */
  .files {
    display: flex;
    align-items: flex-end;
    height: 25px;
    padding-left: 16px;
    border-bottom: 5px solid #5c5c5c;
  }
  .file {
    display: flex;
    align-items: center;
    justify-content: space-between;
    box-sizing: border-box;
    width: 138px;
    height: 22px;
    padding: 1px 22px 0 16px;
    background: linear-gradient(#7b7b7b, #5c5c5c);
    clip-path: polygon(0 100%, 4px 85%, 8px 20%, 12px 0, calc(100% - 12px) 0, calc(100% - 8px) 20%, calc(100% - 4px) 85%, 100% 100%);
  }
  .file button {
    color: #424242;
  }
  .file-add {
    width: 22px;
    height: 15px;
    margin: 0 0 3px -2px;
    border-radius: 0 8px 0 8px;
    background: #525252;
  }

  /* model space */
  .viewport {
    position: relative;
    flex: 1;
    min-height: 440px;
    overflow: hidden;
    border-right: 4px solid #626262;
    background: #000;
  }
  .drawing {
    position: absolute;
    inset: 0;
    fill: none;
  }
  .cursor {
    pointer-events: none;
  }
  .ucs path {
    stroke: #fff;
  }
  .ucs text {
    fill: #eee;
    font: 300 18px 'Open Sans', 'Liberation Sans', sans-serif;
  }
  .lines {
    stroke: #c8c8c8;
    stroke-width: 1.4;
  }
  .dotted {
    stroke: #fff;
    stroke-dasharray: 1.300 2.700;
    stroke-width: 1.3;
  }
  .view-label {
    position: absolute;
    top: 6px;
    left: 3px;
    margin: 0;
  }
  .view-controls {
    position: absolute;
    top: 10px;
    right: 11px;
    display: flex;
    gap: 10px;
  }
  .cube {
    position: absolute;
    top: 40px;
    right: 17px;
    display: flex;
    align-items: center;
    justify-content: center;
    box-sizing: border-box;
    width: 84px;
    height: 84px;
    border: 9px solid #323232;
    border-radius: 50%;
    color: #aaa;
    font: 14px/14px 'Liberation Sans', Arial, sans-serif;
  }
  .cube b {
    position: absolute;
  }
  .cube .n {
    top: -13px;
  }
  .cube .s {
    bottom: -14px;
  }
  .cube .w {
    left: -13px;
  }
  .cube .e {
    right: -11px;
  }
  .cube button {
    width: 36px;
    height: 36px;
    border: 7px solid #adadad;
    box-sizing: border-box;
    background: #989ba4;
    color: #3a3d48;
    font-size: 9px;
    font-weight: bold;
  }
  .wcs {
    position: absolute;
    top: 144px;
    right: 37px;
    gap: 6px;
    width: 47px;
    height: 18px;
    border: 1px solid #8b8b94;
    border-radius: 4px;
    box-sizing: border-box;
    background: #74747f;
    color: #33333d;
  }
  .wcs .arrow {
    border-width: 4px 3px 0;
    border-top-color: #9c9cab;
  }
  .navbar {
    position: absolute;
    top: 187px;
    right: 4px;
    display: flex;
    flex-direction: column;
    align-items: center;
    gap: 4px;
    box-sizing: border-box;
    width: 32px;
    height: 212px;
    padding: 3px 0;
    border: 1px solid #606060;
    border-radius: 4px;
    background: #4c4c4c;
  }
  .navbar .arrow {
    margin: 3px 0;
    border-width: 3px 3px 0;
  }
  .navbar svg {
    opacity: 0.75;
  }
  .dot {
    align-self: flex-end;
    width: 5px;
    height: 5px;
    margin: 0 3px 3px;
    border: 1px solid #333;
    border-radius: 50%;
  }
  .navbar .dot:last-child {
    margin-top: auto;
    margin-bottom: 0;
  }
  .distance {
    position: absolute;
    top: 75px;
    left: 842px;
    box-sizing: border-box;
    width: 47px;
    height: 20px;
    padding: 0 4px;
    border: 1px solid #c9c39a;
    background: linear-gradient(#3292ef, #3292ef) 4px center / 34px 15px no-repeat #fff;
    color: #fff;
    font-size: 11px;
  }
  .angle {
    position: absolute;
    top: 187px;
    left: 957px;
    width: 35px;
    height: 10px;
    border: 1px solid #ccc;
  }
  .hint {
    position: absolute;
    top: 174px;
    left: 873px;
    display: flex;
    align-items: center;
    justify-content: space-between;
    box-sizing: border-box;
    width: 145px;
    height: 23px;
    padding: 0 5px 2px 4px;
    border: 1px solid #c4c4b4;
    background: #16124f;
    color: #c8c8b4;
    font-size: 12px;
    white-space: nowrap;
  }
  .hint svg {
    margin-top: 4px;
  }

  /* command line */
  .command {
    position: absolute;
    bottom: 0;
    left: 253px;
    right: 253px;
    font: 12px/15px 'DejaVu Sans Mono', 'Liberation Mono', monospace;
  }
  .command ul {
    display: flex;
    flex-direction: column;
    align-items: flex-start;
    gap: 5px;
    margin: 0 0 2px 60px;
    padding: 0;
    list-style: none;
  }
  .command li {
    padding: 0 2px;
    border-radius: 2px;
    background: #5b5b5b;
    color: #eee;
    white-space: pre;
  }
  .command li:first-child {
    background: #3f3f3f;
    color: #999;
  }
  .command li:nth-child(2) {
    background: #4d4d4d;
    color: #ccc;
  }
  .command-bar {
    display: flex;
    height: 27px;
  }
  .command-tools {
    display: flex;
    align-items: center;
    width: 54px;
    border-radius: 3px 0 0 3px;
    background: linear-gradient(#858585, #3f3f3f);
    color: #fff;
  }
  .command-tools button {
    width: 20px;
    height: 20px;
  }
  .handle {
    width: 6px;
    height: 17px;
    margin: 0 1px 0 4px;
    background: repeating-linear-gradient(#bbb 0 2px, transparent 2px 3px);
  }
  .prompt {
    display: flex;
    flex: 1;
    align-items: center;
    background: #fff;
    color: #111;
    white-space: nowrap;
  }
  .prompt > svg {
    margin: 0 2px 0 4px;
  }
  .prompt .arrow.dark {
    margin-right: 6px;
    border-width: 4px 3px 0;
    border-top-color: #777;
  }
  .undo {
    border-radius: 3px;
    background: #d2d2d2;
  }
  .undo em {
    color: #1c1ca8;
    font-style: normal;
  }
  .prompt input {
    flex: 1;
    min-width: 0;
    outline: 0;
  }
  .history {
    width: 14px;
  }

  /* status bar */
  footer {
    position: relative;
    display: flex;
    align-items: flex-start;
    justify-content: space-between;
    height: 28px;
    border-top: 1px solid #666;
  }
  .layouts {
    display: flex;
    padding-left: 12px;
  }
  .layouts button {
    height: 17px;
    margin-right: -3px;
    padding: 0 11px;
    background: #555;
    color: #b9b9b9;
    clip-path: polygon(0 0, 100% 0, calc(100% - 4px) 30%, calc(100% - 8px) 90%, calc(100% - 11px) 100%, 11px 100%, 8px 90%, 4px 30%);
  }
  .layouts .active {
    background: linear-gradient(#5c5c5c, #858585);
    color: #fff;
    font-weight: bold;
  }
  .layouts .layout-add {
    width: 22px;
    margin-left: 5px;
    padding: 0;
    clip-path: none;
    border-radius: 8px 0 8px 0;
    background: #4b4b4b;
  }
  .status {
    display: flex;
    border-left: 1px solid #8a8a8a;
  }
  .group {
    display: flex;
    align-items: center;
    height: 24px;
    border: 1px solid #777;
    border-width: 1px 1px 1px 0;
    background: #4a4a4a;
  }
  .model {
    padding: 0 3px;
  }
  .group .tool:only-child {
    width: 27px;
  }
  .group .drop {
    width: 15px;
  }
  .group .drop .arrow {
    border-width: 5px 4px 0;
  }
  .brand {
    position: absolute;
    right: 0;
    bottom: -2px;
    color: rgb(20 20 20 / 50%);
    font: 26px/30px 'Liberation Sans', Arial, sans-serif;
    pointer-events: none;
  }
</style>
